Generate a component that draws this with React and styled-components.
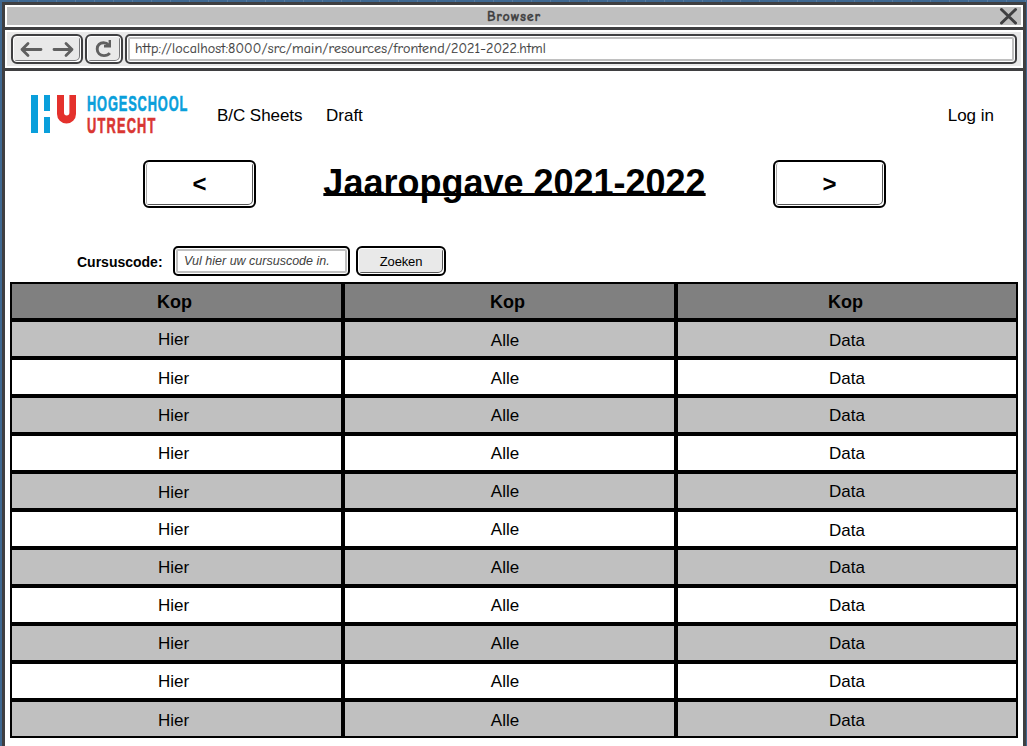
import React from "react";
import styled, { createGlobalStyle, css } from "styled-components";

const GlobalStyle = createGlobalStyle`
  *, *::before, *::after { box-sizing: border-box; }
  body {
    margin: 0;
    overflow: hidden;
    background: #42698f;
    font-family: "Liberation Sans", Arial, sans-serif;
    color: #000;
  }
`;

const ink = "#3f3f41";

const Desktop = styled.div`
  height: 746px;
  padding: 2px 1px 0 2px;
  overflow: hidden;
  background: repeating-linear-gradient(90deg, #3f6891 0 18px, #587a9e 18px 19px);
`;

const Window = styled.div`
  height: 760px;
  border: 3px solid ${ink};
  background: #fff;
`;

const TitleBar = styled.header`
  display: flex;
  align-items: center;
  justify-content: center;
  position: relative;
  height: 22px;
  border: 2px solid #fff;
  padding-top: 2px;
  background: #c0c0c0;
  color: ${ink};
  font: 700 14px/18px "Comic Sans MS", "Comic Neue", Lato, sans-serif;
  letter-spacing: 0.8px;
  -webkit-text-stroke: 0.3px ${ink};
`;

const CloseIcon = styled.svg`
  position: absolute;
  right: 3px;
  top: 0;
`;

const Toolbar = styled.div`
  display: flex;
  gap: 2px;
  height: 44px;
  border: solid ${ink};
  border-width: 3px 0;
  padding: 4px 6px;
  background: #e9e9e9;
  box-shadow: inset 0 0 0 2px #fff;
`;

const ToolButton = styled.button`
  display: flex;
  align-items: center;
  justify-content: center;
  width: ${(p) => p.$width}px;
  height: 30px;
  padding: 0;
  border: 2px solid ${ink};
  border-radius: 6px;
  background: #e9e9e9;
  box-shadow: inset 0 0 0 1px #fff, inset -2px -2px 0 -1px #fff, inset -2px -2px 0 0 #77777a;
`;

const AddressBar = styled.div`
  flex: 1;
  height: 30px;
  border: 2px solid ${ink};
  border-radius: 5px;
  padding-left: 8px;
  background: #fff;
  box-shadow: inset 0 0 0 1px #fff, inset 0 0 0 3px #c0c0c0;
  color: ${ink};
  font: 14px/25px "Comic Sans MS", "Comic Neue", Lato, sans-serif;
  letter-spacing: 0.14px;
  -webkit-text-stroke: 0.15px ${ink};
  white-space: nowrap;
`;

const Page = styled.main`
  padding: 0 5px;
`;

const SiteHeader = styled.div`
  display: flex;
  align-items: center;
  height: 89px;
  padding: 0 24px 0 20px;
`;

const LogoMark = styled.svg`
  align-self: flex-start;
  margin-top: 23px;
  overflow: visible;
`;

const Nav = styled.nav`
  display: flex;
  flex: 1;
  gap: 23.500px;
  margin-left: 29px;
`;

const NavLink = styled.a`
  font-size: 17px;
  line-height: 20px;
  letter-spacing: ${(p) => p.$spacing || 0}px;
  ${(p) => p.$end && css`margin-left: auto;`}
`;

const YearBar = styled.section`
  display: flex;
  align-items: flex-start;
  justify-content: space-between;
  height: 86px;
  padding: 0 132px 0 133px;
`;

const YearButton = styled.button`
  width: 113px;
  height: 48px;
  padding: 0 0 1px;
  border: 2px solid #000;
  border-radius: 6px;
  background: #fff;
  box-shadow: inset 0 0 0 1px #fff, inset -2px -2px 0 -1px #fff, inset 2px 0 0 0 #aaa, inset -2px -2px 0 0 #555;
  font: 700 24px/42px "Liberation Sans", Arial, sans-serif;
  color: #000;
`;

const Title = styled.h1`
  margin: 1px 0 0;
  font-size: 36px;
  line-height: 44px;
  white-space: nowrap;
  text-decoration: underline;
  text-decoration-thickness: 3px;
  text-underline-offset: -2px;
  text-decoration-skip-ink: none;
`;

const SearchForm = styled.div`
  display: flex;
  align-items: center;
  height: 30px;
  margin-bottom: 6px;
  padding-left: 67px;
`;

const Label = styled.label`
  width: 96px;
  padding-top: 2px;
  font-size: 14px;
  font-weight: 700;
`;

const CodeInput = styled.input`
  width: 177px;
  height: 30px;
  margin-right: 6px;
  padding: 0 9px 1px;
  border: 2px solid #000;
  border-radius: 5px;
  background: #fff;
  box-shadow: inset 0 0 0 1px #fff, inset 0 0 0 3px #c0c0c0;
  font: italic 12.5px "Liberation Sans", Arial, sans-serif;
  &::placeholder { color: ${ink}; opacity: 1; }
`;

const SearchButton = styled.button`
  width: 90px;
  height: 30px;
  padding: 0;
  border: 2px solid #000;
  border-radius: 6px;
  background: #e9e9e9;
  box-shadow: inset 0 0 0 1px #fff, inset -2px -2px 0 -1px #fff, inset -2px -2px 0 0 #555;
  font: 13px "Liberation Sans", Arial, sans-serif;
  letter-spacing: -0.15px;
  color: #000;
`;

const Table = styled.div`
  width: 1008px;
`;

const Row = styled.div`
  display: grid;
  grid-template: 38px / 333px 333px 342px;
  background: ${(p) => (p.$head ? "#808080" : p.$shaded ? "#c0c0c0" : "#fff")};
  font-size: ${(p) => (p.$head ? 18 : 17)}px;
  font-weight: ${(p) => (p.$head ? 700 : 400)};
`;

const Cell = styled.div`
  height: 38px;
  padding-top: ${(p) => p.$drop || 0}px;
  border: 2px solid #000;
  line-height: 35px;
  text-align: center;
  &:nth-child(1) { padding-right: 6px; }
  &:nth-child(2) { padding-right: 9px; }
`;

const HeadCell = styled(Cell)`
  padding-top: 1px;
  &:nth-child(1) { padding-right: 4px; }
  &:nth-child(2) { padding-right: 4px; }
  &:nth-child(3) { padding-right: 3px; }
`;

const Logo = () => (
  <LogoMark width="158" height="42" viewBox="0 0 158 42" aria-label="Hogeschool Utrecht">
    <path d="M1 1h7v38H1zM14 1h6v16h-6zM14 23h6v16h-6z" fill="#0a9fdb" />
    <path d="M27 1h7v17.500a2.700 3 0 0 0 5.400 0V1H46v19a9.500 9.500 0 0 1-19 0z" fill="#e4312c" />
    <g
      transform="translate(57 0) scale(0.57 1)"
      fontFamily="Liberation Sans, Arial, sans-serif"
      fontWeight="700"
      fontSize="22.500"
      strokeWidth="0.600"
    >
      <text y="16.800" textLength="176" fill="#0a9fdb" stroke="#0a9fdb">HOGESCHOOL</text>
      <text y="38.800" textLength="120" fill="#d93632" stroke="#d93632">UTRECHT</text>
    </g>
  </LogoMark>
);

const rows = [
  { drops: [0, 1, 1] },
  { drops: [1, 1, 1] },
  { drops: [0, 0, 0] },
  { drops: [0, 0, 0] },
  { drops: [1, 0, 0] },
  { drops: [0, 0, 1] },
  { drops: [0, 0, 0] },
  { drops: [0, 0, 0] },
  { drops: [0, 0, 0] },
  { drops: [0, 0, 0] },
  { drops: [1, 1, 1] },
];

export default function App() {
  return (
    <Desktop>
      <GlobalStyle />
      <Window>
        <TitleBar>
          Browser
          <CloseIcon width="19" height="18" viewBox="0 0 19 18">
            <path d="M2.500 2.500l14 13.500M16.500 2.500l-14 13.500" stroke={ink} strokeWidth="3" strokeLinecap="round" />
          </CloseIcon>
        </TitleBar>
        <Toolbar>
          <ToolButton $width={72} aria-label="History">
            <svg width="56" height="20" viewBox="0 0 56 20" fill="none" stroke="#606060" strokeWidth="2.800" strokeLinecap="round" strokeLinejoin="round">
              <path d="M22 10.500H3M9 4.500L3 10.500l6 6M35 10.500h18M47 4.500l6 6-6 6" />
            </svg>
          </ToolButton>
          <ToolButton $width={38} aria-label="Reload">
            <svg width="20" height="20" viewBox="0 0 20 20" fill="none" stroke="#606060" strokeWidth="2.900">
              <path d="M15.800 14.200C14.500 15.800 12.500 16.600 10 16.600C6 16.600 3.200 14 3.200 10C3.200 6 6 3.800 9.500 3.800C12 3.800 13.500 4.700 15 6.300" />
              <path d="M15.800 1v6.200H10" strokeWidth="2.400" />
            </svg>
          </ToolButton>
          <AddressBar>http://localhost:8000/src/main/resources/frontend/2021-2022.html</AddressBar>
        </Toolbar>
        <Page>
          <SiteHeader>
            <Logo />
            <Nav>
              <NavLink $spacing={-0.05}>B/C Sheets</NavLink>
              <NavLink>Draft</NavLink>
              <NavLink $end>Log in</NavLink>
            </Nav>
          </SiteHeader>
          <YearBar>
            <YearButton>&lt;</YearButton>
            <Title>Jaaropgave 2021-2022</Title>
            <YearButton>&gt;</YearButton>
          </YearBar>
          <SearchForm>
            <Label htmlFor="code">Cursuscode:</Label>
            <CodeInput id="code" placeholder="Vul hier uw cursuscode in." />
            <SearchButton>Zoeken</SearchButton>
          </SearchForm>
          <Table>
            <Row $head>
              <HeadCell>Kop</HeadCell>
              <HeadCell>Kop</HeadCell>
              <HeadCell>Kop</HeadCell>
            </Row>
            {rows.map(({ drops }, i) => (
              <Row key={i} $shaded={i % 2 === 0}>
                <Cell $drop={drops[0]}>Hier</Cell>
                <Cell $drop={drops[1]}>Alle</Cell>
                <Cell $drop={drops[2]}>Data</Cell>
              </Row>
            ))}
          </Table>
        </Page>
      </Window>
    </Desktop>
  );
}
